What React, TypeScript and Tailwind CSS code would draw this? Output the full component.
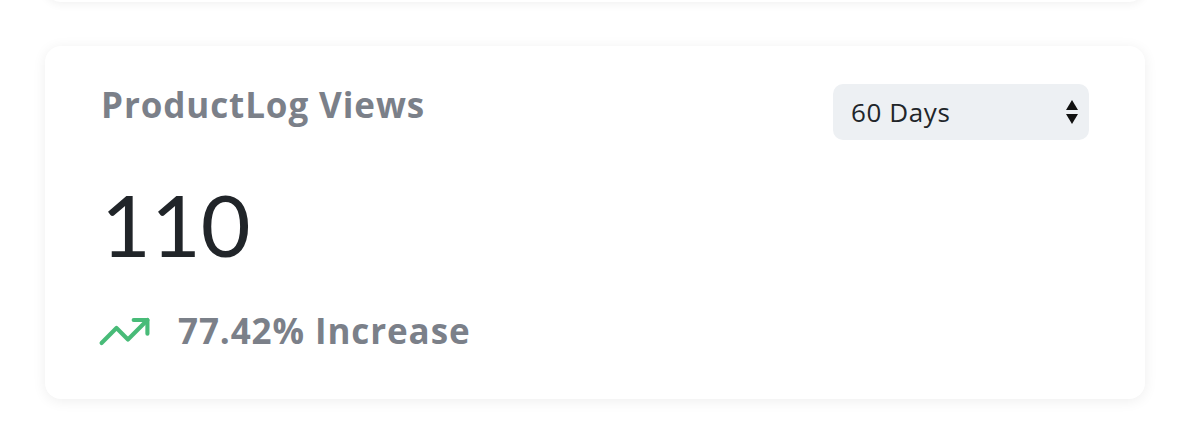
import React, { useState } from 'react';
import { TrendingUp } from 'lucide-react';

const App: React.FC = () => {
  const [range, setRange] = useState('60');

  return (
    <div className="min-h-screen bg-white overflow-hidden" style={{ fontFamily: '"Open Sans", "Noto Sans", sans-serif' }}>
      {/* previous card, only its bottom edge peeks in */}
      <div className="ml-[45px] w-[1100px] h-[40px] -mt-[38px] bg-white rounded-2xl shadow-[0_2px_10px_rgba(0,0,0,0.06)]" />

      {/* Views card */}
      <div className="ml-[45px] mt-[44px] w-[1100px] h-[353px] bg-white rounded-2xl shadow-[0_2px_14px_rgba(0,0,0,0.07)] px-14 pt-[38px]">
        <div className="flex items-start justify-between">
          <h2 className="text-[35px] font-bold text-[#7b8089] leading-none mt-[3px] tracking-[0.9px]">ProductLog Views</h2>
          <div className="relative w-[256px] h-[56px]">
            <select
              value={range}
              onChange={(e) => setRange(e.target.value)}
              className="appearance-none w-full h-full rounded-[10px] bg-[#edf0f3] pl-[18px] text-[26px] text-[#212529] outline-none tracking-[0.6px]"
            >
              <option value="7">7 Days</option>
              <option value="30">30 Days</option>
              <option value="60">60 Days</option>
              <option value="90">90 Days</option>
            </select>
            <svg className="absolute right-[10px] top-[15px] pointer-events-none" width="14" height="26" viewBox="0 0 14 26">
              <path d="M7 1 L13 11 L1 11 Z" fill="#111" />
              <path d="M1 15 L13 15 L7 25 Z" fill="#111" />
            </svg>
          </div>
        </div>

        <div className="mt-[41px] text-[86px] leading-none text-[#212529]" style={{ fontFamily: 'Lato, sans-serif' }}>110</div>

        <div className="mt-[37px] flex items-center gap-[26px]">
          <TrendingUp size={55} strokeWidth={1.8} className="text-[#48bb78] -ml-[4px]" />
          <span className="text-[35px] font-bold text-[#7b8089] tracking-[0.9px]">77.42% Increase</span>
        </div>
      </div>
    </div>
  );
};

export default App;
